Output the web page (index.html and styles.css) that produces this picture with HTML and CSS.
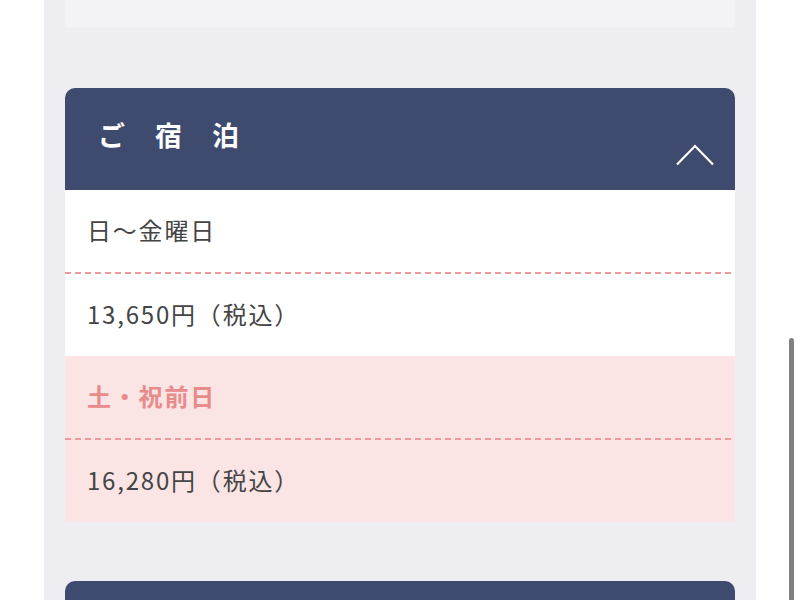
FILE: index.html
```html
<!DOCTYPE html>
<html lang="ja">
<head>
<meta charset="utf-8">
<link rel="stylesheet" href="styles.css">
</head>
<body>
<div class="page">
  <div class="column">
    <div class="card card-prev"></div>
    <section class="card">
      <div class="card-head">
        <h2 class="card-title">ご宿泊</h2>
        <svg class="chevron" width="38" height="22" viewBox="0 0 38 22"><polyline points="1,20.5 19,2 37,20.5" fill="none" stroke="#ffffff" stroke-width="2.2"/></svg>
      </div>
      <div class="group">
        <div class="row">日〜金曜日</div>
        <div class="dash"></div>
        <div class="row">13,650円（税込）</div>
      </div>
      <div class="group group-pink">
        <div class="row row-label">土・祝前日</div>
        <div class="dash"></div>
        <div class="row">16,280円（税込）</div>
      </div>
    </section>
    <section class="card card-next">
      <div class="card-head card-head-next"></div>
    </section>
  </div>
</div>
<div class="scrollbar"></div>
</body>
</html>
```
FILE: styles.css
```css
html, body {
  margin: 0;
  padding: 0;
  background: #ffffff;
  height: 600px;
  overflow: hidden;
  font-family: "Noto Sans CJK JP", "Noto Sans", sans-serif;
}
.page {
  display: flex;
  padding-left: 44px;
}
.column {
  width: 712px;
  background: #ededf2;
  padding: 0 21px;
  box-sizing: border-box;
  display: flex;
  flex-direction: column;
  gap: 60px;
  height: 600px;
}
.card {
  width: 670px;
  flex-shrink: 0;
}
.card-next {
  margin-top: -1px;
}
.card-prev {
  height: 28px;
  background: #f3f3f5;
  border-bottom: 1px solid #f0f0f4;
  box-sizing: border-box;
}
.card-head {
  background: #3e4a6e;
  border-radius: 10px 10px 0 0;
  height: 102px;
  position: relative;
  box-sizing: border-box;
  padding: 28px 0 0 33px;
}
.card-head-next {
  height: 40px;
}
.card-title {
  margin: 0;
  color: #ffffff;
  font-size: 27px;
  font-weight: 700;
  letter-spacing: 30px;
  line-height: 38px;
}
.chevron {
  position: absolute;
  right: 21px;
  top: 56px;
}
.group {
  background: #ffffff;
}
.group-pink {
  background: #fbe4e4;
}
.row {
  height: 82px;
  display: flex;
  align-items: center;
  padding: 0 0 3px 22px;
  box-sizing: border-box;
  font-size: 24px;
  color: #444444;
  letter-spacing: 1.8px;
}
.row-label {
  color: #e88b8b;
  font-weight: 700;
}
.dash {
  height: 2px;
  background: repeating-linear-gradient(90deg, #ee9a9a 0 6px, transparent 6px 10px);
}
.scrollbar {
  position: fixed;
  left: 789px;
  top: 338px;
  width: 5px;
  height: 300px;
  background: #808080;
  border-radius: 3px;
}
```
